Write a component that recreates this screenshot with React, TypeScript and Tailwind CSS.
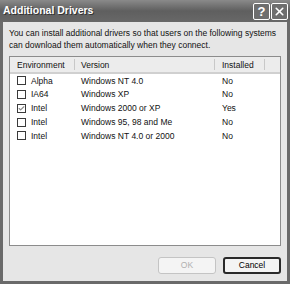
import { Check, X } from 'lucide-react'

const rows = [
  { env: 'Alpha', version: 'Windows NT 4.0', installed: 'No', checked: false },
  { env: 'IA64', version: 'Windows XP', installed: 'No', checked: false },
  { env: 'Intel', version: 'Windows 2000 or XP', installed: 'Yes', checked: true },
  { env: 'Intel', version: 'Windows 95, 98 and Me', installed: 'No', checked: false },
  { env: 'Intel', version: 'Windows NT 4.0 or 2000', installed: 'No', checked: false },
]

function CheckBox({ checked }: { checked: boolean }) {
  return (
    <span className="flex h-[9px] w-[9px] shrink-0 items-center justify-center border border-[#3a3a3a] bg-white">
      {checked && <Check className="h-[7px] w-[7px] text-[#8a8a8a]" strokeWidth={4} />}
    </span>
  )
}

export default function App() {
  return (
    <div
      className="flex h-[284px] w-[290px] flex-col bg-[#6a6a6a] text-[8.5px] text-[#111]"
      style={{ fontFamily: '"Liberation Sans", Arial, sans-serif' }}
    >
      <div className="flex h-[22px] shrink-0 items-center bg-gradient-to-b from-[#8a8a8a] via-[#5f5f5f] to-[#686868] pl-[3px] pr-[2px]">
        <span className="flex-1 text-[10.5px] font-bold text-white [text-shadow:1px_1px_0_#333]">Additional Drivers</span>
        <div className="flex gap-[1px]">
          <span className="flex h-[17px] w-[17px] items-center justify-center rounded-[2px] border border-white bg-[#6e6e6e] text-[13px] font-bold leading-none text-white">
            ?
          </span>
          <span className="flex h-[17px] w-[17px] items-center justify-center rounded-[2px] border border-white bg-[#6e6e6e] text-white">
            <X className="h-[13px] w-[13px]" strokeWidth={3} />
          </span>
        </div>
      </div>

      <div className="mx-[3px] mb-[3px] flex flex-1 flex-col bg-[#e6e6e6] px-[6px]">
        <p className="mt-[6px] leading-[11.5px]">
          You can install additional drivers so that users on the following systems can download them automatically when they connect.
        </p>

        <div className="mt-[5px] flex h-[190px] flex-col border border-[#8c8c8c] bg-white">
          <div className="flex h-[17px] border-b-2 border-[#d0d0d0] bg-[#ececec]">
            <div className="my-[2px] flex w-[65px] items-center border-r border-[#c8c8c8] pl-[7px] pt-[2px]">Environment</div>
            <div className="my-[2px] flex w-[140px] items-center border-r border-[#c8c8c8] pl-[6px] pt-[2px]">Version</div>
            <div className="my-[2px] flex w-[50px] items-center border-r border-[#c8c8c8] pl-[7px] pt-[2px]">Installed</div>
            <div className="flex-1" />
          </div>
          <div>
            {rows.map((row, i) => (
              <div key={i} className="flex h-[13.75px] items-center">
                <div className="flex w-[65px] items-center gap-[5px] pl-[7px]">
                  <CheckBox checked={row.checked} />
                  <span>{row.env}</span>
                </div>
                <div className="w-[140px] pl-[6px]">{row.version}</div>
                <div className="w-[50px] pl-[7px]">{row.installed}</div>
              </div>
            ))}
          </div>
        </div>

        <div className="mt-[11px] flex justify-end gap-[7px]">
          <button className="h-[17px] w-[58px] rounded-[3px] border border-[#c4c4c4] bg-[#f4f4f4] text-[8.5px] text-[#b0b0b0]">
            OK
          </button>
          <button className="h-[17px] w-[58px] rounded-[3px] border-2 border-[#2a2a2a] bg-[#f4f4f4] text-[8.5px] text-black">
            Cancel
          </button>
        </div>
      </div>
    </div>
  )
}
